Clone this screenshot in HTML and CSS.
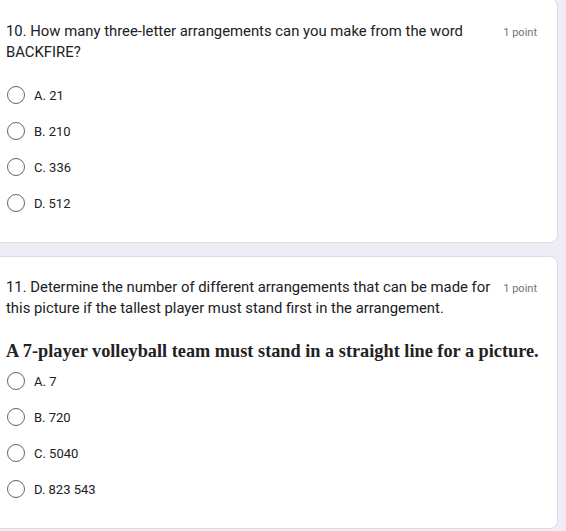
FILE: index.html
```html
<!DOCTYPE html>
<html>
<head>
<meta charset="utf-8">
<link rel="stylesheet" href="styles.css">
</head>
<body>
<div class="page">
  <section class="card card-first">
    <div class="head">
      <div class="title">10. How many three-letter arrangements can you make from the word BACKFIRE?</div>
      <div class="points">1 point</div>
    </div>
    <div class="options">
      <div class="option"><span class="radio"></span><span class="label">A. 21</span></div>
      <div class="option"><span class="radio"></span><span class="label">B. 210</span></div>
      <div class="option"><span class="radio"></span><span class="label">C. 336</span></div>
      <div class="option"><span class="radio"></span><span class="label">D. 512</span></div>
    </div>
  </section>
  <section class="card">
    <div class="head">
      <div class="title">11. Determine the number of different arrangements that can be made for this picture if the tallest player must stand first in the arrangement.</div>
      <div class="points">1 point</div>
    </div>
    <div class="problem">A 7-player volleyball team must stand in a straight line for a picture.</div>
    <div class="options options-tight">
      <div class="option"><span class="radio"></span><span class="label">A. 7</span></div>
      <div class="option"><span class="radio"></span><span class="label">B. 720</span></div>
      <div class="option"><span class="radio"></span><span class="label">C. 5040</span></div>
      <div class="option"><span class="radio"></span><span class="label">D. 823 543</span></div>
    </div>
  </section>
</div>
</body>
</html>
```

FILE: styles.css
```css
html, body {
  margin: 0;
  padding: 0;
}
body {
  background: #efebf7;
  font-family: Roboto, "Liberation Sans", sans-serif;
  color: #202124;
  overflow: hidden;
}
.page {
  display: flex;
  flex-direction: column;
  gap: 13px;
  margin-left: -10px;
  width: 568px;
}
.card {
  box-sizing: border-box;
  width: 568px;
  background: #ffffff;
  border: 1px solid #dadce0;
  border-radius: 8px;
  padding: 20px 20px 21px 15px;
}
.card-first {
  margin-top: -2px;
  padding-top: 22px;
}
.head {
  display: flex;
  align-items: flex-start;
  gap: 8px;
}
.title {
  flex: 1;
  font-size: 14.85px;
  line-height: 21px;
  color: #202124;
}
.points {
  flex: none;
  font-size: 11px;
  line-height: 21px;
  color: #70757a;
  padding-top: 1px;
}
.options {
  margin-top: 14px;
  display: flex;
  flex-direction: column;
}
.options-tight {
  margin-top: 0;
}
.option {
  height: 36px;
  display: flex;
  align-items: center;
}
.radio {
  box-sizing: border-box;
  width: 18px;
  height: 18px;
  border: 1.6px solid #5f6368;
  border-radius: 50%;
  margin-left: 1px;
  margin-right: 9px;
  flex: none;
}
.label {
  font-size: 13px;
  color: #202124;
}
.problem {
  margin-top: 20px;
  font-family: "Liberation Serif", "DejaVu Serif", serif;
  font-weight: bold;
  font-size: 18.3px;
  line-height: 24px;
  color: #222;
  white-space: nowrap;
}
```
